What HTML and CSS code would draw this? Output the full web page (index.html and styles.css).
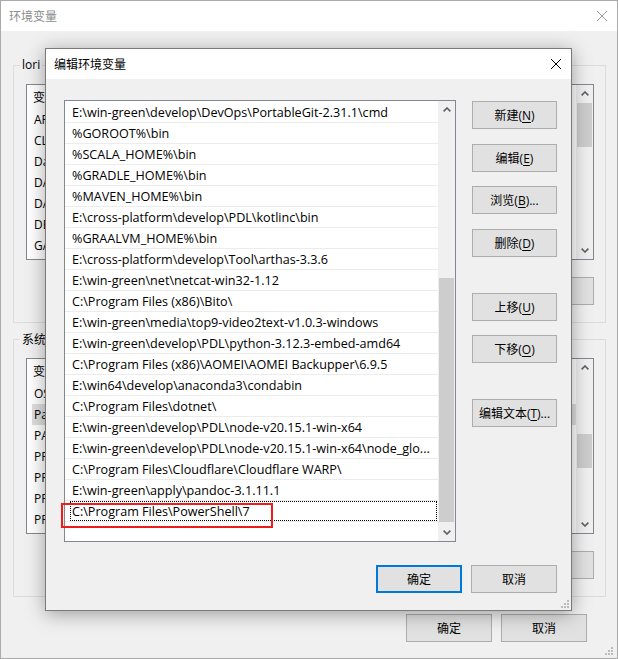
FILE: index.html
```html
<!DOCTYPE html>
<html lang="zh-CN">
<head>
<meta charset="utf-8">
<title>编辑环境变量</title>
<link rel="stylesheet" href="styles.css">
</head>
<body>
<div class="win">
  <div class="win-title">
    <span>环境变量</span>
    <svg class="xicon" width="10" height="10" viewBox="0 0 10 10"><path d="M0 0L10 10M10 0L0 10" stroke="#9a9a9a" stroke-width="1" fill="none"/></svg>
  </div>
  <div class="win-body">
    <fieldset class="group">
      <legend>lori</legend>
      <div class="lv">
        <div class="lv-main">
          <div class="lv-head">变</div>
          <div class="lv-row">AP</div>
          <div class="lv-row">CL</div>
          <div class="lv-row">Da</div>
          <div class="lv-row">DA</div>
          <div class="lv-row">DA</div>
          <div class="lv-row">DE</div>
          <div class="lv-row">GA</div>
        </div>
        <div class="vsb">
          <div class="sb-btn"><svg width="8" height="5" viewBox="0 0 8 5"><path d="M0.6 4.4L4 1L7.4 4.4" stroke="#606060" stroke-width="1.6" fill="none"/></svg></div>
          <div class="sb-track t1"><div class="sb-thumb h1"></div></div>
          <div class="sb-btn"><svg width="8" height="5" viewBox="0 0 8 5"><path d="M0.6 0.6L4 4L7.4 0.6" stroke="#606060" stroke-width="1.6" fill="none"/></svg></div>
        </div>
      </div>
      <div class="grp-btns">
        <div class="btn bgbtn"></div>
      </div>
    </fieldset>
    <fieldset class="group g2">
      <legend>系统</legend>
      <div class="lv">
        <div class="lv-main">
          <div class="lv-head">变</div>
          <div class="lv-row">OS</div>
          <div class="lv-row sel">Pa</div>
          <div class="lv-row">PA</div>
          <div class="lv-row">PR</div>
          <div class="lv-row">PR</div>
          <div class="lv-row">PR</div>
          <div class="lv-row">PR</div>
        </div>
        <div class="vsb">
          <div class="sb-btn"><svg width="8" height="5" viewBox="0 0 8 5"><path d="M0.6 4.4L4 1L7.4 4.4" stroke="#606060" stroke-width="1.6" fill="none"/></svg></div>
          <div class="sb-track t2"><div class="sb-thumb h2"></div></div>
          <div class="sb-btn"><svg width="8" height="5" viewBox="0 0 8 5"><path d="M0.6 0.6L4 4L7.4 0.6" stroke="#606060" stroke-width="1.6" fill="none"/></svg></div>
        </div>
      </div>
      <div class="grp-btns">
        <div class="btn bgbtn"></div>
      </div>
    </fieldset>
    <div class="win-foot">
      <button class="btn">确定</button>
      <button class="btn">取消</button>
    </div>
  </div>
  <svg class="grip bg-grip" width="8" height="8" viewBox="0 0 8 8"><rect x="6" y="0" width="2" height="2"/><rect x="3" y="3" width="2" height="2"/><rect x="6" y="3" width="2" height="2"/><rect x="0" y="6" width="2" height="2"/><rect x="3" y="6" width="2" height="2"/><rect x="6" y="6" width="2" height="2"/></svg>
</div>

<div class="dlg">
  <div class="dlg-title">
    <span>编辑环境变量</span>
    <svg class="xicon" width="10" height="10" viewBox="0 0 10 10"><path d="M0 0L10 10M10 0L0 10" stroke="#000" stroke-width="1" fill="none"/></svg>
  </div>
  <div class="dlg-body">
    <div class="plist">
      <div class="prows">
        <div class="prow">E:\win-green\develop\DevOps\PortableGit-2.31.1\cmd</div>
        <div class="prow">%GOROOT%\bin</div>
        <div class="prow">%SCALA_HOME%\bin</div>
        <div class="prow">%GRADLE_HOME%\bin</div>
        <div class="prow">%MAVEN_HOME%\bin</div>
        <div class="prow">E:\cross-platform\develop\PDL\kotlinc\bin</div>
        <div class="prow">%GRAALVM_HOME%\bin</div>
        <div class="prow">E:\cross-platform\develop\Tool\arthas-3.3.6</div>
        <div class="prow">E:\win-green\net\netcat-win32-1.12</div>
        <div class="prow">C:\Program Files (x86)\Bito\</div>
        <div class="prow">E:\win-green\media\top9-video2text-v1.0.3-windows</div>
        <div class="prow">E:\win-green\develop\PDL\python-3.12.3-embed-amd64</div>
        <div class="prow">C:\Program Files (x86)\AOMEI\AOMEI Backupper\6.9.5</div>
        <div class="prow">E:\win64\develop\anaconda3\condabin</div>
        <div class="prow">C:\Program Files\dotnet\</div>
        <div class="prow">E:\win-green\develop\PDL\node-v20.15.1-win-x64</div>
        <div class="prow">E:\win-green\develop\PDL\node-v20.15.1-win-x64\node_glo...</div>
        <div class="prow">C:\Program Files\Cloudflare\Cloudflare WARP\</div>
        <div class="prow">E:\win-green\apply\pandoc-3.1.11.1</div>
        <div class="prow focus"><div class="focus-box">C:\Program Files\PowerShell\7</div></div>
      </div>
      <div class="vsb">
        <div class="sb-btn"><svg width="8" height="5" viewBox="0 0 8 5"><path d="M0.6 4.4L4 1L7.4 4.4" stroke="#606060" stroke-width="1.6" fill="none"/></svg></div>
        <div class="sb-track t3"><div class="sb-thumb h3"></div></div>
        <div class="sb-btn"><svg width="8" height="5" viewBox="0 0 8 5"><path d="M0.6 0.6L4 4L7.4 0.6" stroke="#606060" stroke-width="1.6" fill="none"/></svg></div>
      </div>
    </div>
    <div class="side-btns">
      <button class="btn sbtn first">新建(<u>N</u>)</button>
      <button class="btn sbtn g15">编辑(<u>E</u>)</button>
      <button class="btn sbtn g14">浏览(<u>B</u>)...</button>
      <button class="btn sbtn g15">删除(<u>D</u>)</button>
      <button class="btn sbtn g36">上移(<u>U</u>)</button>
      <button class="btn sbtn g14">下移(<u>O</u>)</button>
      <button class="btn sbtn g36">编辑文本(<u>T</u>)...</button>
    </div>
  </div>
  <div class="dlg-foot">
    <button class="btn default">确定</button>
    <button class="btn">取消</button>
  </div>
  <div class="mark"></div>
  <svg class="grip dlg-grip" width="8" height="8" viewBox="0 0 8 8"><rect x="6" y="0" width="2" height="2"/><rect x="3" y="3" width="2" height="2"/><rect x="6" y="3" width="2" height="2"/><rect x="0" y="6" width="2" height="2"/><rect x="3" y="6" width="2" height="2"/><rect x="6" y="6" width="2" height="2"/></svg>
</div>
</body>
</html>
```
FILE: styles.css
```css
* { box-sizing: border-box; }
html, body { margin: 0; padding: 0; }
body {
  width: 618px;
  height: 659px;
  overflow: hidden;
  position: relative;
  background: #f0f0f0;
  color: #000;
  font-family: "Open Sans", "Noto Sans CJK SC", sans-serif;
  font-size: 12px;
}
u { text-decoration: underline; text-underline-offset: 2px; }

/* background window */
.win {
  width: 618px;
  height: 659px;
  border: 1px solid #aaaaaa;
  background: #f0f0f0;
  display: flex;
  flex-direction: column;
  position: relative;
}
.win-title {
  height: 30px;
  flex: none;
  background: #fff;
  color: #8c8c8c;
  display: flex;
  align-items: center;
  justify-content: space-between;
  padding: 0 10px 0 8px;
}
.xicon { display: block; }
.win-body {
  flex: 1;
  padding: 25px 11px 0 12px;
  display: flex;
  flex-direction: column;
}
.group {
  margin: 0;
  min-width: 0;
  border: 1px solid #dcdcdc;
  padding: 10px 11px 17px 12px;
}
.group legend {
  padding: 0 2px;
  margin-left: -6px;
  line-height: 18px;
  height: 18px;
}
.g2 { margin-top: 7px; }
.g2 legend { line-height: 20px; }
.lv {
  height: 176px;
  border: 1px solid #828790;
  background: #fff;
  display: flex;
  overflow: hidden;
}
.lv-main { flex: 1; min-width: 0; overflow: hidden; }
.lv-head {
  height: 24px;
  line-height: 25px;
  padding-left: 6px;
  white-space: nowrap;
}
.lv-row {
  height: 21px;
  line-height: 21px;
  margin-left: 5px;
  padding-left: 2px;
  white-space: nowrap;
}
.lv-row.sel { background: #dedede; }
.grp-btns {
  display: flex;
  justify-content: flex-end;
  margin-top: 17px;
}
.btn {
  height: 28px;
  width: 86px;
  margin: 0;
  padding: 0;
  border: 1px solid #adadad;
  background: #e1e1e1;
  color: #000;
  font-family: inherit;
  font-size: 12px;
  display: flex;
  align-items: center;
  justify-content: center;
  white-space: nowrap;
}
.bgbtn { width: 90px; }
.win-foot {
  display: flex;
  justify-content: flex-end;
  gap: 9px;
  margin-top: 17px;
  padding-right: 19px;
}

/* scrollbars */
.vsb {
  width: 17px;
  flex: none;
  background: #f0f0f0;
  display: flex;
  flex-direction: column;
}
.sb-btn {
  height: 17px;
  flex: none;
  display: flex;
  align-items: center;
  justify-content: center;
}
.sb-btn svg { display: block; }
.sb-track { flex: 1; }
.sb-thumb { margin: 0 1px; background: #cdcdcd; }
.t1 { padding-top: 1px; }
.h1 { height: 44px; }
.t2 { padding-top: 58px; }
.h2 { height: 34px; }
.t3 { padding-top: 160px; }
.h3 { height: 244px; }

.grip { position: absolute; fill: #bcbcbc; }
.bg-grip { right: 4px; bottom: 3px; }

/* dialog */
.dlg {
  position: absolute;
  left: 45px;
  top: 48px;
  width: 527px;
  height: 563px;
  border: 1px solid #7a7a7a;
  background: #f0f0f0;
  box-shadow: 0 3px 18px rgba(0, 0, 0, 0.35);
  display: flex;
  flex-direction: column;
}
.dlg-title {
  height: 30px;
  flex: none;
  background: #fff;
  display: flex;
  align-items: center;
  justify-content: space-between;
  padding: 0 10px 0 8px;
}
.dlg-body {
  display: flex;
  gap: 16px;
  padding: 21px 14px 0 18px;
}
.plist {
  width: 392px;
  height: 442px;
  flex: none;
  border: 1px solid #828790;
  background: #fff;
  display: flex;
}
.prows { flex: 1; min-width: 0; padding-top: 1px; }
.prow {
  height: 21px;
  line-height: 22px;
  border-bottom: 1px solid #ececec;
  padding-left: 7px;
  white-space: nowrap;
  overflow: hidden;
  font-size: 12.6px;
}
.prow.focus { padding-left: 0; }
.focus-box {
  height: 20px;
  margin: 0 1px 0 5px;
  border: 1px dotted #000;
  padding-left: 1px;
  line-height: 20px;
}
.side-btns {
  width: 85px;
  flex: none;
  display: flex;
  flex-direction: column;
}
.sbtn { width: 85px; }
.first { margin-top: 1px; }
.g15 { margin-top: 15px; }
.g14 { margin-top: 14px; }
.g36 { margin-top: 36px; }
.dlg-foot {
  display: flex;
  justify-content: flex-end;
  gap: 9px;
  margin-top: 23px;
  padding-right: 14px;
}
.btn.default { border: 2px solid #0078d7; }
.mark {
  position: absolute;
  left: 15px;
  top: 454px;
  width: 212px;
  height: 25px;
  border: 2px solid #f01c1c;
}
.dlg-grip { right: 2px; bottom: 2px; }
```
